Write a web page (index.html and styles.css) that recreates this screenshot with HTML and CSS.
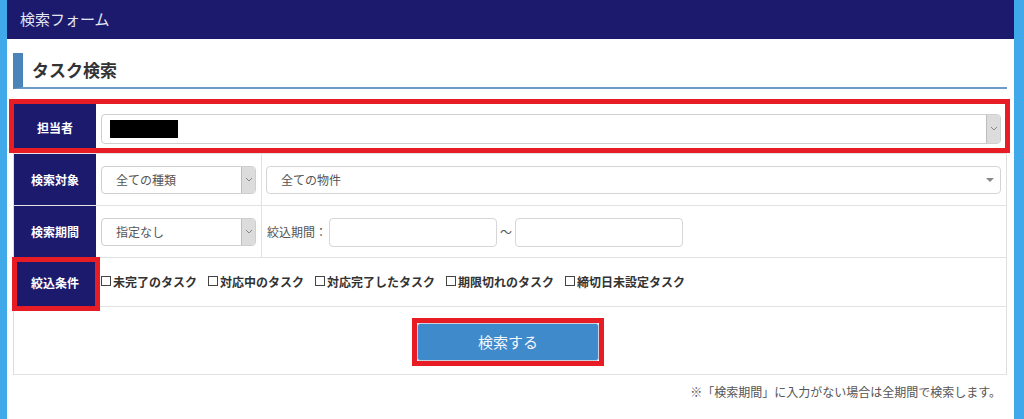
FILE: index.html
```html
<!DOCTYPE html>
<html lang="ja">
<head>
<meta charset="utf-8">
<title>検索フォーム</title>
<link rel="stylesheet" href="styles.css">
</head>
<body>
<div class="page">
  <header class="topbar">検索フォーム</header>
  <h2 class="title">タスク検索</h2>
  <div class="form">
    <div class="row row-mark">
      <div class="th">担当者</div>
      <div class="td td-fill">
        <div class="sel sel-user">
          <span class="redact"></span>
          <span class="arrow"><svg width="8" height="5" viewBox="0 0 8 5"><polyline points="1,1 4,4 7,1" fill="none" stroke="#888" stroke-width="1"/></svg></span>
        </div>
      </div>
    </div>
    <div class="row">
      <div class="th">検索対象</div>
      <div class="td td-narrow">
        <div class="sel"><span class="val">全ての種類</span><span class="arrow"><svg width="8" height="5" viewBox="0 0 8 5"><polyline points="1,1 4,4 7,1" fill="none" stroke="#888" stroke-width="1"/></svg></span></div>
      </div>
      <div class="td td-fill td-second">
        <div class="sel sel-plain"><span class="val">全ての物件</span><span class="tri"></span></div>
      </div>
    </div>
    <div class="row">
      <div class="th">検索期間</div>
      <div class="td td-narrow">
        <div class="sel"><span class="val">指定なし</span><span class="arrow"><svg width="8" height="5" viewBox="0 0 8 5"><polyline points="1,1 4,4 7,1" fill="none" stroke="#888" stroke-width="1"/></svg></span></div>
      </div>
      <div class="td td-fill td-period">
        <span class="lbl">絞込期間：</span>
        <span class="inp"></span>
        <span class="tilde">～</span>
        <span class="inp"></span>
      </div>
    </div>
    <div class="row row-cond">
      <div class="th th-mark">絞込条件</div>
      <div class="td td-fill td-checks">
        <span class="chk"><span class="box"></span>未完了のタスク</span>
        <span class="chk"><span class="box"></span>対応中のタスク</span>
        <span class="chk"><span class="box"></span>対応完了したタスク</span>
        <span class="chk"><span class="box"></span>期限切れのタスク</span>
        <span class="chk"><span class="box"></span>締切日未設定タスク</span>
      </div>
    </div>
    <div class="row row-btn">
      <span class="btn-frame"><button class="btn" type="button">検索する</button></span>
    </div>
  </div>
  <p class="note">※「検索期間」に入力がない場合は全期間で検索します。</p>
</div>
</body>
</html>
```
FILE: styles.css
```css
* { box-sizing: border-box; }
html, body { margin: 0; padding: 0; }
body {
  background: #3fa9ea;
  font-family: "Noto Sans CJK JP", "Noto Sans", sans-serif;
  font-size: 12px;
  color: #333;
  height: 419px;
  overflow: hidden;
}
.page {
  margin: 0 10px 0 7px;
  background: #fff;
  height: 419px;
}
.topbar {
  height: 39px;
  background: #1c1a6d;
  color: #e6e6f0;
  font-size: 15px;
  line-height: 37px;
  padding-left: 13px;
}
.title {
  margin: 14px 7px 0 6px;
  height: 36px;
  border-left: 10px solid #4a84b9;
  border-bottom: 2px solid #6d9bc9;
  padding-left: 9px;
  font-size: 17px;
  font-weight: bold;
  line-height: 33px;
  color: #333;
}
.form {
  margin: 12px 7px 0 6px;
  border: 1px solid #dedede;
  border-bottom: none;
}
.row {
  display: flex;
  align-items: center;
  height: 52px;
  border-bottom: 1px solid #e2e2e2;
}
.row-mark { position: relative; z-index: 1; }
.row-mark::after {
  content: "";
  position: absolute;
  left: -5px;
  right: -4px;
  top: -3px;
  bottom: 0;
  border: 5px solid #e81c25;
  pointer-events: none;
}
.row-cond { height: 49px; }
.row-btn { height: 68px; justify-content: center; padding-right: 4px; }
.th {
  position: relative;
  width: 82px;
  align-self: stretch;
  background: #1c1a6d;
  color: #fff;
  font-weight: bold;
  font-size: 12px;
  display: flex;
  align-items: center;
  justify-content: center;
  flex: none;
}
.th-mark::after {
  content: "";
  position: absolute;
  left: -2px;
  right: -4px;
  top: -1px;
  bottom: -5px;
  border: 5px solid #e81c25;
}
.td {
  align-self: stretch;
  display: flex;
  align-items: center;
  padding: 0 5px;
}
.td-fill { flex: 1; min-width: 0; }
.td-narrow {
  width: 166px;
  flex: none;
  border-right: 1px solid #e2e2e2;
}
.td-second { padding-left: 4px; }
.sel {
  position: relative;
  display: flex;
  align-items: center;
  height: 28px;
  width: 155px;
  border: 1px solid #cfcfcf;
  border-radius: 4px;
  background: #fff;
  color: #555;
  font-size: 12px;
}
.sel .val { padding-left: 14px; flex: 1; }
.sel .arrow {
  align-self: stretch;
  width: 14px;
  background: #dcdcdc;
  border-left: 1px solid #bdbdbd;
  border-radius: 0 3px 3px 0;
  display: flex;
  align-items: center;
  justify-content: center;
}
.sel-user {
  width: auto;
  flex: 1;
  height: 30px;
  margin-top: 2px;
}
.sel-user .redact {
  display: block;
  width: 68px;
  height: 18px;
  background: #000;
  margin-left: 8px;
  margin-right: auto;
}
.sel-plain {
  flex: 1;
  width: auto;
  border-color: #d4d4d4;
}
.sel-plain .tri {
  width: 0;
  height: 0;
  border-left: 4px solid transparent;
  border-right: 4px solid transparent;
  border-top: 4px solid #888;
  margin-right: 6px;
}
.td-period { color: #555; }
.td-period .lbl { margin-right: 2px; }
.inp {
  display: block;
  width: 168px;
  height: 29px;
  border: 1px solid #d6d6d6;
  border-radius: 4px;
  margin-top: 2px;
}
.tilde { margin: 0 3px; font-size: 12px; }
.td-checks {
  gap: 11px;
  font-weight: bold;
  color: #333;
  padding-bottom: 2px;
}
.chk { display: inline-flex; align-items: center; white-space: nowrap; }
.box {
  display: inline-block;
  width: 10px;
  height: 10px;
  border: 1px solid #444;
  margin-right: 2px;
  background: #fff;
}
.btn-frame {
  display: block;
  border: 5px solid #e81c25;
  background: #fff;
  margin-top: 2px;
}
.btn {
  display: block;
  width: 182px;
  height: 38px;
  margin: 0;
  background: #3f8acb;
  color: #f2f6fb;
  border: 1px solid #c9d3dd;
  border-radius: 3px;
  font-family: "Noto Sans CJK JP", sans-serif;
  font-size: 15px;
}
.note {
  margin: 8px 13px 0 0;
  text-align: right;
  font-size: 12px;
  color: #555;
}
```
